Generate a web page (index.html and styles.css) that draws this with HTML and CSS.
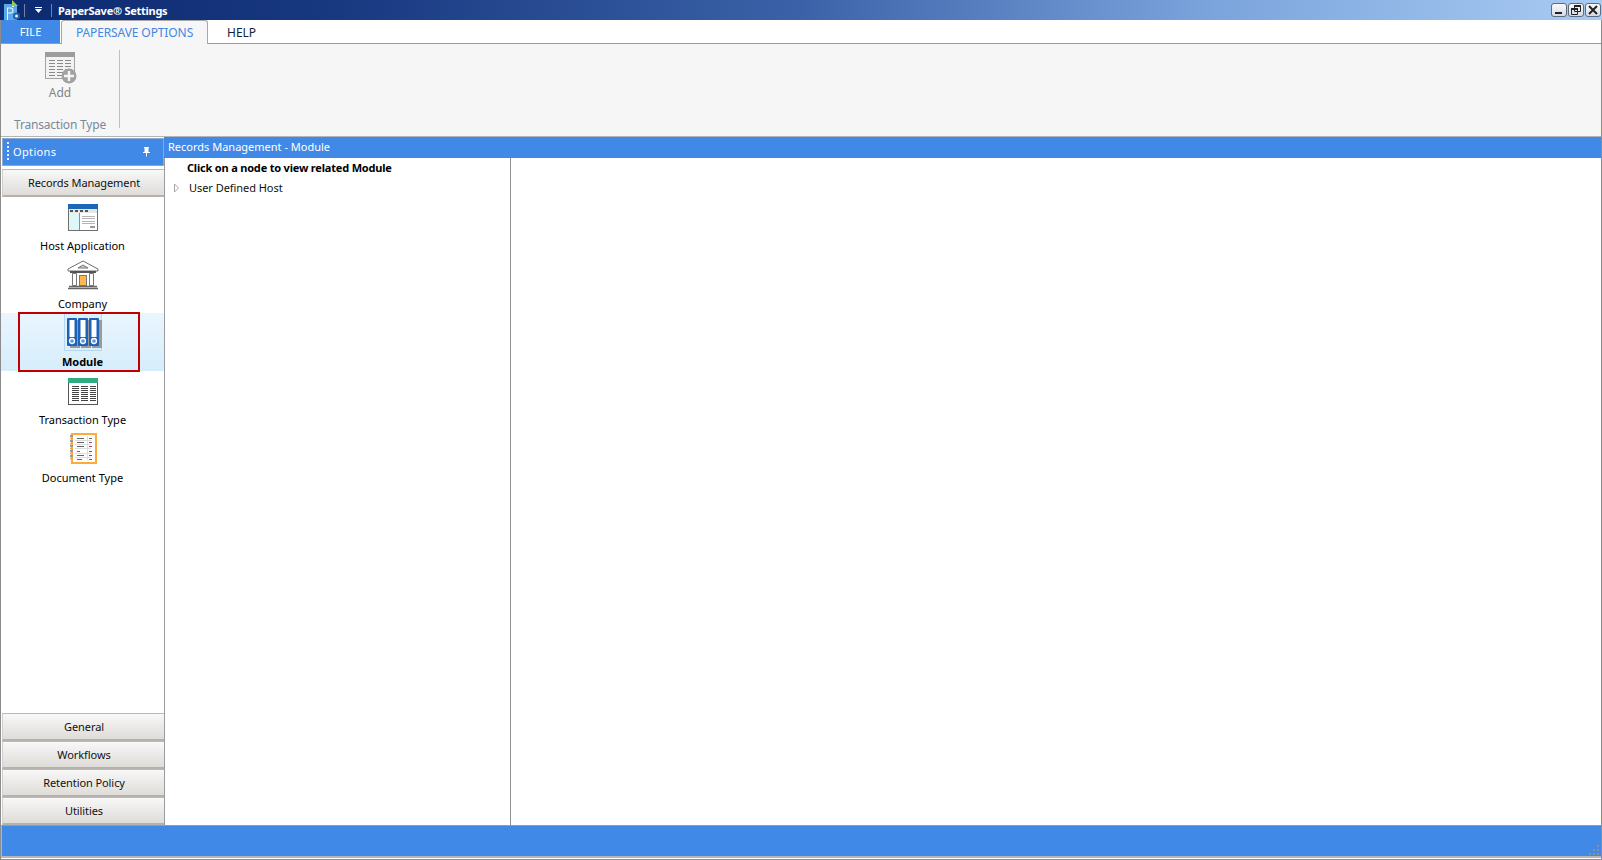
FILE: index.html
```html
<!DOCTYPE html>
<html lang="en">
<head>
<meta charset="utf-8">
<title>PaperSave Settings</title>
<link rel="stylesheet" href="styles.css">
</head>
<body>
<div class="window">
  <header class="titlebar">
    <svg class="logo" width="21" height="20" viewBox="0 0 21 20"><path d="M3 4h8V1l5 5v14H3z" fill="#5aa7ea"/><path d="M11 0l6 6h-6z" fill="#9acb4a"/><path d="M11 6h2v1h-2z" fill="#e6f2c8"/><path d="M6 7.500h3.500a2.800 2.800 0 0 1 0 6H7V20H6zM7 8.500v4h2.500a2 2 0 0 0 0-4z" fill="#e8f4ff"/><circle cx="15.500" cy="16" r="3.500" fill="#245f9c"/><circle cx="15.500" cy="16" r="1.500" fill="#dfeefa"/></svg>
    <span class="qat-sep"></span>
    <svg class="qat-arrow" width="9" height="8" viewBox="0 0 9 8"><path d="M1 1.500h7" stroke="#fff"/><path d="M1 3h7L4.500 7z" fill="#fff"/></svg>
    <span class="qat-sep"></span>
    <span class="title">PaperSave® Settings</span>
    <div class="winbtns">
      <span class="winbtn"><svg width="10" height="9" viewBox="0 0 10 9"><rect x="1" y="6" width="7" height="2" fill="#222"/></svg></span>
      <span class="winbtn"><svg width="10" height="10" viewBox="0 0 10 10"><path d="M3.500 .5h6v6h-6zM.5 3.500h6v6h-6z" fill="none" stroke="#222"/><path d="M3 0h7v2H3zM0 3h7v2H0z" fill="#222"/></svg></span>
      <span class="winbtn"><svg width="10" height="10" viewBox="0 0 10 10"><path d="M1 1l8 8M9 1l-8 8" stroke="#222" stroke-width="2"/></svg></span>
    </div>
  </header>

  <nav class="tabs">
    <span class="tab-file">FILE</span>
    <span class="tab-active">PAPERSAVE OPTIONS</span>
    <span class="tab-help">HELP</span>
  </nav>

  <section class="ribbon">
    <div class="ribbon-group">
      <div class="ribbon-cmd">
        <svg width="32" height="32" viewBox="0 0 32 32">
          <rect x=".5" y=".5" width="29" height="26" fill="#f2f2f2" stroke="#a3a3a3"/>
          <rect x="0" y="0" width="30" height="5" fill="#9c9c9c"/>
          <path d="M4 8.500h6M4 11.500h6M4 14.500h6M4 17.500h6M4 20.500h6M4 23.500h6M12 8.500h6M12 11.500h6M12 14.500h6M12 17.500h6M12 20.500h6M12 23.500h6M20 8.500h6M20 11.500h6M20 14.500h6M20 17.500h2" stroke="#8a8a8a" stroke-width="1"/>
          <circle cx="24" cy="24" r="7.500" fill="#a2a2a2"/>
          <path d="M24 19v10M19 24h10" stroke="#f4f4f4" stroke-width="2.400"/>
        </svg>
        <span class="ribbon-label">Add</span>
      </div>
      <span class="ribbon-group-name">Transaction Type</span>
    </div>
    <span class="ribbon-sep"></span>
  </section>

  <main class="workspace">
    <aside class="sidebar">
      <div class="options-head">
        <span class="grip"></span>
        <span class="options-title">Options</span>
        <svg class="pin" width="9" height="11" viewBox="0 0 9 11"><path d="M2 1h5v1H6.500v4H8v1H5v3.500H4V7H1V6h1.500V2H2z" fill="#fff"/></svg>
      </div>
      <div class="nav-btn">Records Management</div>
      <ul class="nav-items">
        <li class="nav-item">
          <svg class="nav-icon" width="30" height="28" viewBox="0 0 30 28"><rect x=".5" y=".5" width="29" height="26" fill="#fff" stroke="#6f6f6f"/><rect width="30" height="5" fill="#1b67b5"/><rect x="1" y="5" width="28" height="4" fill="#e6e6e6"/><path d="M2 7h3M7 7h3M12 7h3M17 7h3" stroke="#555" stroke-width="2"/><rect x="1" y="9" width="10" height="17" fill="#dff6fb"/><path d="M11.500 9v17" stroke="#8f8f8f"/><path d="M14 12.500h13M14 14.500h13M14 17.500h13M14 19.500h13" stroke="#b5b5b5"/><rect x="22" y="22" width="5" height="2" fill="#9a9a9a"/></svg>
          <span>Host Application</span>
        </li>
        <li class="nav-item">
          <svg class="nav-icon" width="32" height="30" viewBox="0 0 32 30"><path d="M16 1L1 9v2h30V9z" fill="#fff" stroke="#6f6f6f"/><path d="M11 8l5-3 5 3z" fill="#ccc" stroke="#777"/><path d="M3 12h26" stroke="#555" stroke-width="2"/><path d="M5.500 13.500h4v12h-4zM22.500 13.500h4v12h-4z" fill="#fff" stroke="#777"/><rect x="12.500" y="15.500" width="7" height="10" fill="#fdb94d" stroke="#777"/><path d="M2 26.500h28M1 28.500h30" stroke="#666" stroke-width="1.500"/></svg>
          <span>Company</span>
        </li>
        <li class="nav-item is-selected">
          <span class="icon-frame">
            <svg width="36" height="32" viewBox="0 0 36 32"><rect x="3" y="2" width="10" height="28" fill="#9a9a9a"/><rect x="14" y="2" width="10" height="28" fill="#9a9a9a"/><rect x="25" y="2" width="10" height="28" fill="#9a9a9a"/><g fill="#1b62b8"><rect x="0" y="0" width="10" height="28" rx="1"/><rect x="11" y="0" width="10" height="28" rx="1"/><rect x="22" y="0" width="10" height="28" rx="1"/></g><g fill="#fff"><rect x="2.500" y="2" width="5" height="17"/><rect x="13.500" y="2" width="5" height="17"/><rect x="24.500" y="2" width="5" height="17"/></g><g fill="#5a9be0" stroke="#fff" stroke-width="1.300"><circle cx="5" cy="23" r="2.500"/><circle cx="16" cy="23" r="2.500"/><circle cx="27" cy="23" r="2.500"/></g></svg>
          </span>
          <span>Module</span>
        </li>
        <li class="nav-item">
          <svg class="nav-icon" width="30" height="28" viewBox="0 0 30 28"><rect x=".5" y=".5" width="29" height="26" fill="#fff" stroke="#555"/><rect width="30" height="5" fill="#2fad80"/><path d="M4 8.500h7M4 10.500h7M4 12.500h7M4 14.500h7M4 16.500h7M4 18.500h7M4 20.500h7M4 22.500h7M13 8.500h7M13 10.500h7M13 12.500h7M13 14.500h7M13 16.500h7M13 18.500h7M13 20.500h7M13 22.500h7M22 8.500h6M22 10.500h6M22 12.500h6M22 14.500h6M22 16.500h6M22 18.500h6M22 20.500h6M22 22.500h6" stroke="#444"/></svg>
          <span>Transaction Type</span>
        </li>
        <li class="nav-item">
          <svg class="nav-icon" width="28" height="31" viewBox="0 0 28 31"><rect x="3" y="1" width="24" height="29" fill="#fff" stroke="#fdab3d" stroke-width="2"/><path d="M6 7.500h16M6 11.500h16M6 15.500h16M6 20.500h16M6 24.500h16" stroke="#ddd"/><path d="M18.500 3v24" stroke="#ddd"/><path d="M8 5.500h7M8 9.500h7M8 13.500h7M8 18.500h3M8 22.500h7M8 26.500h5M20 5.500h3M20 9.500h3M20 18.500h3M20 26.500h3" stroke="#666"/><path d="M20 13.500h3M20 22.500h3" stroke="#c33"/><path d="M1 3h3M1 8h3M1 13h3M1 18h3M1 23h3" stroke="#999" stroke-width="2"/><path d="M1 5.500h3M1 10.500h3M1 15.500h3M1 20.500h3M1 25.500h3" stroke="#f5a93a" stroke-width="1.500"/></svg>
          <span>Document Type</span>
        </li>
      </ul>
      <div class="nav-foot">
        <div class="nav-btn">General</div>
        <div class="nav-btn">Workflows</div>
        <div class="nav-btn">Retention Policy</div>
        <div class="nav-btn">Utilities</div>
      </div>
    </aside>

    <section class="content">
      <div class="content-head">Records Management - Module</div>
      <div class="content-body">
        <div class="tree">
          <div class="tree-title">Click on a node to view related Module</div>
          <div class="tree-node">
            <svg width="7" height="10" viewBox="0 0 7 10"><path d="M1.500 1l4 4-4 4z" fill="#fff" stroke="#a6a6a6"/></svg>
            <span>User Defined Host</span>
          </div>
        </div>
        <div class="detail"></div>
      </div>
    </section>
  </main>

  <footer class="statusbar">
    <svg class="resize-grip" width="12" height="12" viewBox="0 0 12 12"><path d="M9 1h2v2H9zM9 5h2v2H9zM5 5h2v2H5zM9 9h2v2H9zM5 9h2v2H5zM1 9h2v2H1z" fill="#8a8f96"/></svg>
  </footer>
</div>
</body>
</html>
```

FILE: styles.css
```css
*, *::after { box-sizing: border-box; }
html, body { margin: 0; padding: 0; height: 100%; overflow: hidden; }
body { font-family: "Noto Sans", "DejaVu Sans", sans-serif; font-size: 11px; color: #111; background: #fff; }
.window { width: 1602px; height: 860px; display: flex; flex-direction: column; border-left: 1px solid #8c8c8c; border-right: 1px solid #8c8c8c; border-bottom: 1px solid #8c8c8c; padding-bottom: 1px; }

.titlebar { height: 20px; flex: none; display: flex; align-items: center; margin-left: -1px; margin-right: -1px; background: linear-gradient(90deg, #0c2a72 0%, #17377f 20%, #3b62a8 50%, #7aa3dc 75%, #a8cbf2 100%); }
.logo { margin-left: 1px; flex: none; }
.qat-sep { width: 3px; height: 13px; margin-left: 2px; border-left: 1px solid #6f83ad; border-right: 1px solid #1a2f66; }
.qat-arrow { margin: 0 6px 0 7px; }
.title { margin-left: 4px; color: #fff; font-weight: 700; font-size: 11px; letter-spacing: -.27px; }
.winbtns { margin-left: auto; margin-right: 1px; display: flex; gap: 1px; }
.winbtn { width: 16px; height: 14px; display: flex; align-items: center; justify-content: center; border: 1px solid #5b6b80; border-radius: 3px; background: linear-gradient(#fafafa, #d6dbe2); }

.tabs { height: 24px; flex: none; display: flex; align-items: flex-end; background: #fff; border-bottom: 1px solid #9b9b9b; }
.tab-file { width: 59px; height: 23px; background: #4189e6; color: #fff; font-size: 11px; letter-spacing: .1px; display: flex; align-items: center; justify-content: center; }
.tab-active { width: 147px; height: 24px; margin-left: 1px; margin-bottom: -1px; background: #f6f6f6; color: #3f88e5; font-size: 12px; letter-spacing: -.1px; border: 1px solid #a8a8a8; border-bottom: none; border-radius: 3px 3px 0 0; display: flex; align-items: center; justify-content: center; }
.tab-help { margin-left: 19px; height: 23px; padding-top: 1px; font-size: 12px; color: #10263f; display: flex; align-items: center; }

.ribbon { height: 92px; flex: none; display: flex; background: #f6f6f6; }
.ribbon-group { width: 118px; display: flex; flex-direction: column; align-items: center; }
.ribbon-cmd { display: flex; flex-direction: column; align-items: center; padding-top: 8px; height: 73px; }
.ribbon-cmd svg { margin-left: 1px; }
.ribbon-label { font-size: 12px; color: #848484; }
.ribbon-group-name { font-size: 12px; color: #79889a; line-height: 16px; letter-spacing: -.2px; }
.ribbon-sep { width: 1px; height: 78px; margin-top: 6px; background: #b4c0d4; }

.workspace { flex: 1; min-height: 0; display: flex; }
.sidebar { width: 164px; flex: none; display: flex; flex-direction: column; border-right: 1px solid #9a9a9a; border-top: 1px solid #b5b5b5; padding-top: 1px; }
.options-head { height: 28px; flex: none; margin: 0 0 3px 1px; padding-bottom: 1px; background: #4189e6; border: 1px solid #8fa9cc; color: #fff; display: flex; align-items: center; font-size: 11px; letter-spacing: .35px; }
.grip { width: 2px; height: 19px; margin-left: 4px; background: repeating-linear-gradient(#e8eefa 0 2px, transparent 2px 4px); }
.options-title { margin-left: 4px; }
.pin { margin-left: auto; margin-right: 12px; }
.nav-btn { height: 28px; flex: none; margin-left: 1px; display: flex; align-items: center; justify-content: center; padding-left: 1px; color: #111; letter-spacing: -.08px; background: linear-gradient(#f8f8f8, #dfdcd8); border-top: 1px solid #bdbab6; border-bottom: 2px solid #b5b2ae; border-left: 1px solid #d0d0d0; }
.nav-items { list-style: none; margin: 0; padding: 0; flex: 1; }
.nav-item { height: 58px; position: relative; display: flex; flex-direction: column; align-items: center; justify-content: flex-end; padding-bottom: 1px; color: #000; line-height: 16px; }
.nav-icon { display: block; margin-bottom: 6px; }
.is-selected { background: linear-gradient(#e9f6fe, #d6edfb); font-weight: 700; }
.is-selected::after { content: ""; position: absolute; left: 17px; top: -1px; width: 122px; height: 60px; border: 2px solid #c00000; }
.icon-frame { width: 38px; height: 37px; margin-bottom: 3px; padding: 4px 0 0 2px; border: 1px solid #b3d7f5; border-top: none; background: #dcf0fc; display: block; }
.icon-frame svg { display: block; }
.nav-foot { flex: none; }

.content { flex: 1; min-width: 0; display: flex; flex-direction: column; }
.content-head { height: 22px; flex: none; background: #4189e6; color: #fff; display: flex; align-items: center; padding: 0 0 3px 4px; margin-left: -1px; border-top: 1px solid #b5b5b5; }
.content-body { flex: 1; min-height: 0; display: flex; }
.tree { width: 346px; flex: none; border-right: 1px solid #8f8f8f; }
.tree-title { height: 19px; padding-left: 22px; font-weight: 700; color: #000; letter-spacing: -.19px; display: flex; align-items: center; }
.tree-node { height: 21px; display: flex; align-items: center; padding-left: 8px; letter-spacing: -.05px; }
.tree-node span { margin-left: 9px; }
.detail { flex: 1; }

.statusbar { height: 33px; flex: none; position: relative; background: #4189e6; border-top: 1px solid #9a9a9a; border-bottom: 2px solid #b5b5b5; border-left: 1px solid #b5b5b5; }
.resize-grip { position: absolute; right: 1px; bottom: 0; }
```
